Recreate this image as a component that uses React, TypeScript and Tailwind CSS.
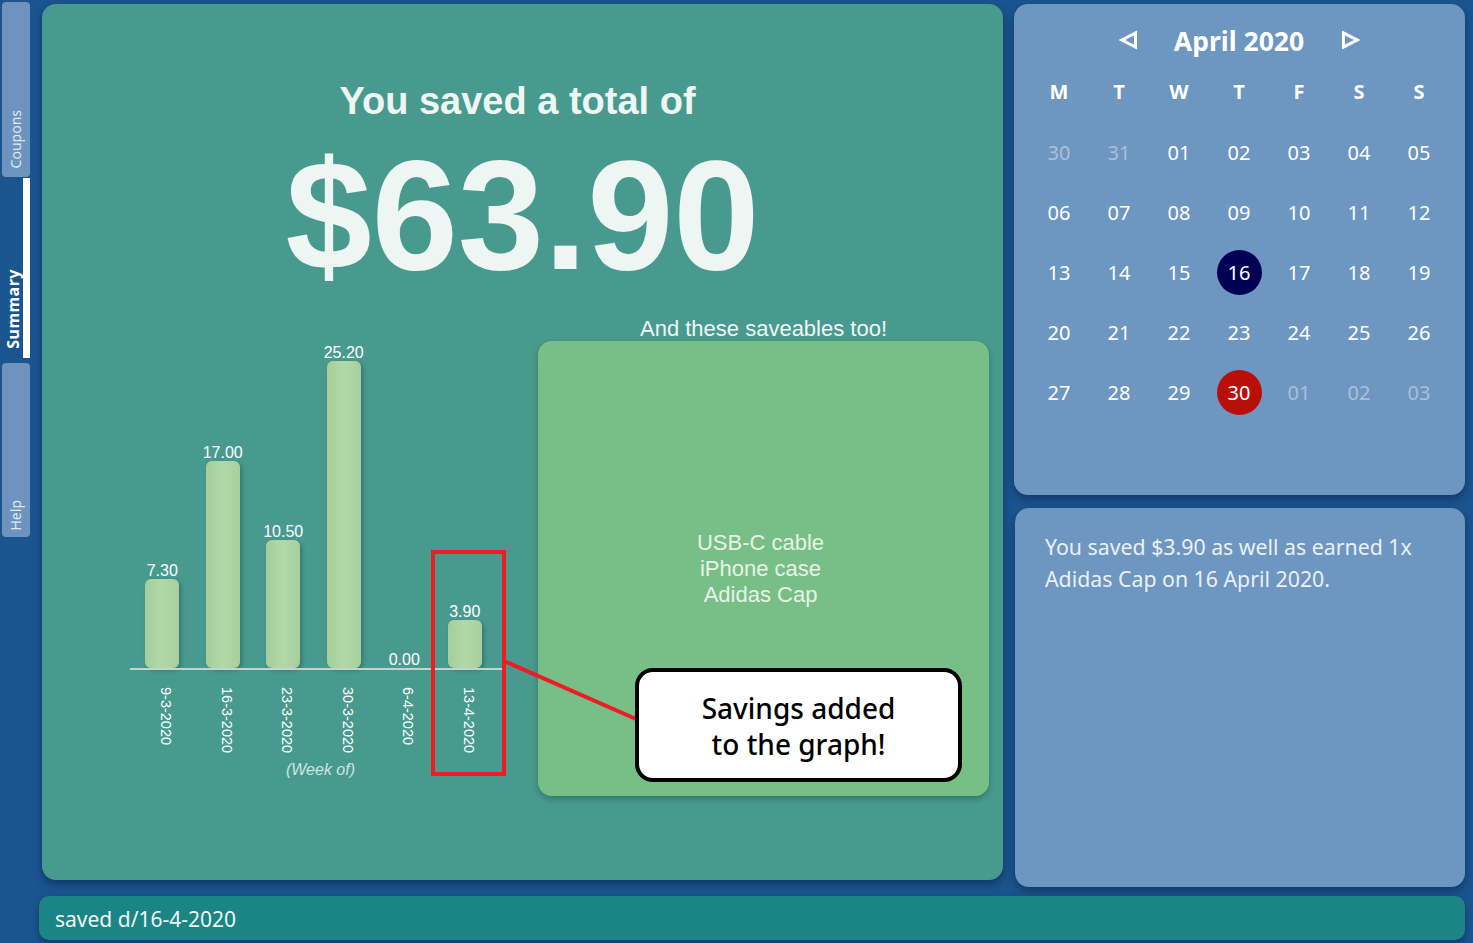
import React from "react";

const bars = [
  { label: "9-3-2020", value: 7.3 },
  { label: "16-3-2020", value: 17.0 },
  { label: "23-3-2020", value: 10.5 },
  { label: "30-3-2020", value: 25.2 },
  { label: "6-4-2020", value: 0 },
  { label: "13-4-2020", value: 3.9 },
];
const SCALE = 12.18;

type Day = { d: string; dim?: boolean; mark?: "today" | "end" };
const weeks: Day[][] = [
  [{ d: "30", dim: true }, { d: "31", dim: true }, { d: "01" }, { d: "02" }, { d: "03" }, { d: "04" }, { d: "05" }],
  [{ d: "06" }, { d: "07" }, { d: "08" }, { d: "09" }, { d: "10" }, { d: "11" }, { d: "12" }],
  [{ d: "13" }, { d: "14" }, { d: "15" }, { d: "16", mark: "today" }, { d: "17" }, { d: "18" }, { d: "19" }],
  [{ d: "20" }, { d: "21" }, { d: "22" }, { d: "23" }, { d: "24" }, { d: "25" }, { d: "26" }],
  [{ d: "27" }, { d: "28" }, { d: "29" }, { d: "30", mark: "end" }, { d: "01", dim: true }, { d: "02", dim: true }, { d: "03", dim: true }],
];
const heads = ["M", "T", "W", "T", "F", "S", "S"];

const arial = "font-['Liberation_Sans',Arial,sans-serif]";
const segoe = "font-['Noto_Sans','Open_Sans',sans-serif]";

function Sidebar() {
  return (
    <div className={`w-[30px] shrink-0 pt-[2px] pl-[2px] flex flex-col ${segoe}`}>
      <div className="h-[175px] rounded-[4px] bg-[#6d93be] flex flex-col items-center justify-end pb-[9px]">
        <span className="[writing-mode:vertical-rl] rotate-180 text-[14px] leading-[14px] text-[#dfe8f3]">Coupons</span>
      </div>
      <div className="h-[180px] mt-[1px] flex flex-row">
        <div className="flex-1 flex flex-col items-center justify-end pb-[9px]">
          <span className="[writing-mode:vertical-rl] rotate-180 text-[16px] leading-[16px] font-bold tracking-[0.5px] text-white">Summary</span>
        </div>
        <div className="w-[7px] bg-white" />
      </div>
      <div className="h-[174px] mt-[5px] rounded-[4px] bg-[#6d93be] flex flex-col items-center justify-end pb-[7px]">
        <span className="[writing-mode:vertical-rl] rotate-180 text-[14px] leading-[14px] text-[#dfe8f3]">Help</span>
      </div>
    </div>
  );
}

function Chart() {
  return (
    <div className={`ml-[88px] w-[373px] mt-[9px] flex flex-col ${arial}`}>
      <div className="h-[366px] flex flex-row items-end pl-[2px]">
        {bars.map((b) => (
          <div key={b.label} className="w-[60.5px] flex flex-col items-center justify-end">
            <span className="text-[16px] leading-[16px] text-white">{b.value.toFixed(2)}</span>
            {b.value > 0 && (
              <div
                className="w-[34px] rounded-[6px] bg-linear-to-r from-[#a5ce9c] via-[#b2d8a9] to-[#a7cf9e] shadow-[2px_2px_4px_rgba(0,40,30,0.3)]"
                style={{ height: `${Math.round(b.value * SCALE)}px` }}
              />
            )}
          </div>
        ))}
      </div>
      <div className="h-[2px] bg-[#c6d2cf]" />
      <div className="h-[70px] mt-[17px] flex flex-row pl-[2px]">
        {bars.map((b) => (
          <div key={b.label} className="w-[60.5px] flex flex-row justify-center pl-[8px]">
            <span className="[writing-mode:vertical-rl] text-[14.5px] leading-[16px] text-white">{b.label}</span>
          </div>
        ))}
      </div>
      <div className="mt-[3px] text-center pl-[8px] italic text-[16px] leading-[20px] text-[#cbe6df]">(Week of)</div>
    </div>
  );
}

function MainPanel() {
  return (
    <div className="relative mt-[4px] ml-[3px] w-[961px] h-[876px] rounded-[14px] bg-[#489a8f] shadow-[0_4px_8px_rgba(10,30,60,0.55)] flex flex-col">
      <div className={`mt-[78px] pr-[10px] text-center text-[38px] leading-[38px] font-bold text-[#eef6f4] ${arial}`}>You saved a total of</div>
      <div className={`mt-[18px] text-center text-[155px] leading-[155px] font-bold text-[#eef6f4] ${arial}`}>$63.90</div>
      <div className="flex flex-row items-start">
        <Chart />
        <div className={`ml-auto mr-[14px] w-[451px] flex flex-col ${arial}`}>
          <div className="mt-[25px] text-center text-[22px] leading-[22px] text-[#eef6f4]">And these saveables too!</div>
          <div className="mt-[1px] h-[455px] rounded-[14px] bg-[#77bf87] shadow-[0_3px_6px_rgba(0,40,30,0.3)] flex flex-col items-center justify-center pr-[6px] text-[22px] leading-[26px] text-[#e6f3e6]">
            <span>USB-C cable</span>
            <span>iPhone case</span>
            <span>Adidas Cap</span>
          </div>
        </div>
      </div>

      <div className="absolute left-[389px] top-[546px] w-[75px] h-[226px] border-[4px] border-[#ee1c25]" />
      <svg className="absolute left-0 top-0 pointer-events-none" width="961" height="876">
        <line x1="462" y1="657" x2="594" y2="715" stroke="#ee1c25" strokeWidth="4" />
      </svg>
      <div className="absolute left-[593px] top-[664px] w-[327px] h-[114px] rounded-[18px] border-[4px] border-black bg-white flex flex-col items-center justify-center pt-[2px] font-['Noto_Sans',sans-serif] font-medium text-[28px] leading-[36px] text-black">
        <span>Savings added</span>
        <span>to the graph!</span>
      </div>
    </div>
  );
}

function Triangle({ dir }: { dir: "left" | "right" }) {
  return (
    <svg width="20" height="20" viewBox="0 0 20 20">
      {dir === "left" ? (
        <polygon points="16.5,3 16.5,17 3,10" fill="none" stroke="white" strokeWidth="3" strokeLinejoin="miter" />
      ) : (
        <polygon points="3.5,3 3.5,17 17,10" fill="none" stroke="white" strokeWidth="3" strokeLinejoin="miter" />
      )}
    </svg>
  );
}

function Calendar() {
  return (
    <div className={`h-[491px] rounded-[14px] bg-[#6d97c0] shadow-[0_4px_8px_rgba(10,30,60,0.5)] pt-[16px] pl-[15px] pr-[16px] flex flex-col ${segoe}`}>
      <div className="h-[42px] flex flex-row items-center justify-center pl-[1px]">
        <div className="mr-[35px] mt-[-2px]"><Triangle dir="left" /></div>
        <span className="text-[26.5px] leading-[42px] font-bold text-white">April 2020</span>
        <div className="ml-[36px] mt-[-2px]"><Triangle dir="right" /></div>
      </div>
      <div className="grid grid-cols-7 w-[420px]">
        {heads.map((h, i) => (
          <div key={i} className="h-[60px] flex items-center justify-center text-[20px] font-bold text-white">{h}</div>
        ))}
        {weeks.flat().map((day, i) => (
          <div key={i} className={`h-[60px] flex items-center justify-center ${i === 0 ? "" : ""}`}>
            {day.mark ? (
              <div className={`w-[45px] h-[45px] mt-[1px] rounded-full flex items-center justify-center text-[20px] text-white ${day.mark === "today" ? "bg-[#020055]" : "bg-[#b80f0a]"}`}>{day.d}</div>
            ) : (
              <span className={`mt-[1px] text-[20px] ${day.dim ? "text-[#a9c0da]" : "text-white"}`}>{day.d}</span>
            )}
          </div>
        ))}
      </div>
    </div>
  );
}

export default function App() {
  return (
    <div className="w-[1473px] h-[943px] bg-[#1a5590] flex flex-row overflow-hidden">
      <Sidebar />
      <div className="flex-1 flex flex-col pl-[9px] pr-[8px]">
        <div className="flex flex-row items-start h-[887px]">
          <MainPanel />
          <div className="ml-[11px] w-[451px] flex flex-col pt-[4px]">
            <Calendar />
            <div className={`mt-[13px] h-[379px] ml-[1px] rounded-[14px] bg-[#6d97c0] shadow-[0_4px_8px_rgba(10,30,60,0.5)] pt-[23px] pl-[30px] pr-[20px] text-[21.3px] leading-[32px] text-[#eaf0f7] ${segoe}`}>
              You saved $3.90 as well as earned 1x Adidas Cap on 16 April 2020.
            </div>
          </div>
        </div>
        <div className={`mt-[9px] h-[44px] rounded-[10px] bg-[#1b8585] shadow-[0_3px_6px_rgba(10,30,60,0.5)] flex items-center pl-[16px] pt-[4px] text-[21px] text-[#f0f6f6] ${segoe}`}>
          saved d/16-4-2020
        </div>
      </div>
    </div>
  );
}
